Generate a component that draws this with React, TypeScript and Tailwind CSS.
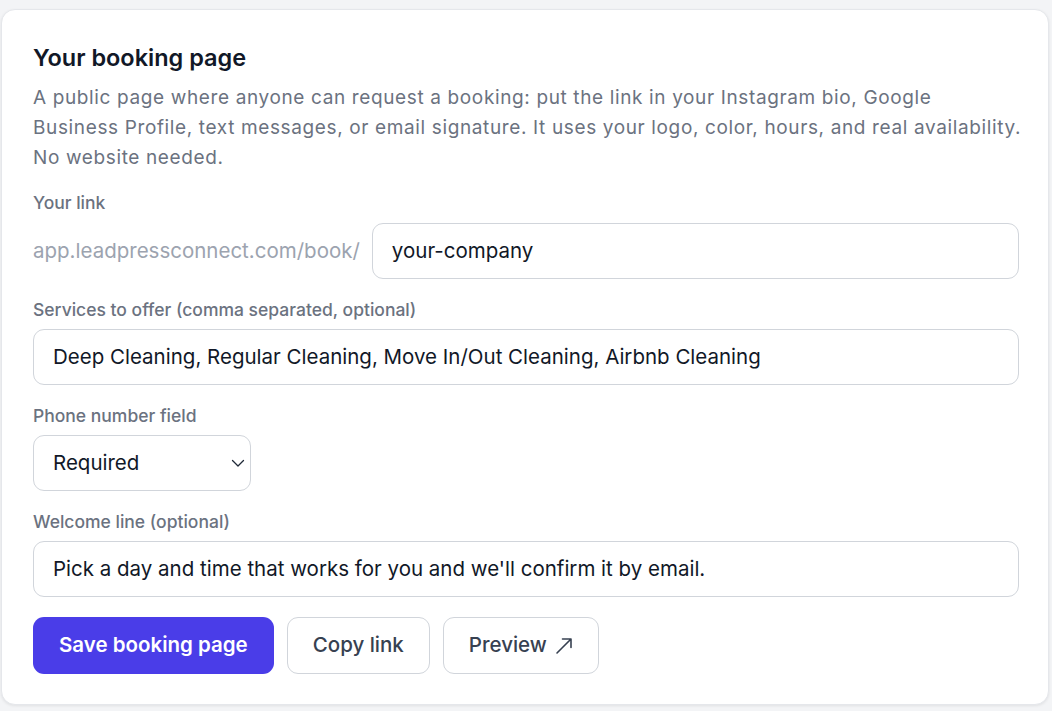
import React from "react";

function Label({ children }: { children: React.ReactNode }) {
  return <div className="text-[17.5px] leading-[20px] font-medium text-[#6b7280]">{children}</div>;
}

export default function App() {
  return (
    <div
      className="min-h-[711px] w-full bg-[#f3f4f6] pt-[9px] pl-[1px] pr-[3px] pb-[6px]"
      style={{ fontFamily: "Inter, 'Noto Sans', sans-serif" }}
    >
      <div className="rounded-[14px] border border-[#e5e7eb] bg-white pl-[31px] pr-[29px] pt-[33px] pb-[30px] shadow-[0_1px_3px_rgba(0,0,0,0.08)]">
        <h2 className="text-[23.5px] leading-[30px] font-semibold text-[#111827]">Your booking page</h2>
        <p className="mt-[10px] mr-[-18px] whitespace-nowrap text-[19px] leading-[30px] tracking-[0.63px] text-[#6b7280]">
          A public page where anyone can request a booking: put the link in your Instagram bio, Google
          <br />
          Business Profile, text messages, or email signature. It uses your logo, color, hours, and real availability.
          <br />
          No website needed.
        </p>

        <div className="mt-[20px] flex flex-col gap-[21px]">
          <div>
            <Label>Your link</Label>
            <div className="mt-[10px] flex items-center gap-[12px]">
              <span className="text-[20.5px] text-[#9ca3af] whitespace-nowrap">app.leadpressconnect.com/book/</span>
              <div className="flex h-[56px] flex-1 items-center rounded-[11px] border border-[#d1d5db] px-[19px] text-[20.5px] text-[#111827]">
                your-company
              </div>
            </div>
          </div>

          <div>
            <Label>Services to offer (comma separated, optional)</Label>
            <div className="mt-[9px] flex h-[56px] items-center rounded-[11px] border border-[#d1d5db] px-[19px] text-[20.5px] text-[#111827]">
              Deep Cleaning, Regular Cleaning, Move In/Out Cleaning, Airbnb Cleaning
            </div>
          </div>

          <div>
            <Label>Phone number field</Label>
            <div className="mt-[9px] flex h-[56px] w-[218px] items-center justify-between rounded-[11px] border border-[#d1d5db] pl-[19px] pr-[4px] text-[20.5px] text-[#111827]">
              <span>Required</span>
              <svg width="16" height="16" viewBox="0 0 16 16" fill="none">
                <path d="M2.5 5.5l5.5 5.5 5.5-5.5" stroke="#1f2937" strokeWidth="1.3" strokeLinecap="round" strokeLinejoin="round" />
              </svg>
            </div>
          </div>

          <div>
            <Label>Welcome line (optional)</Label>
            <div className="mt-[9px] flex h-[56px] items-center rounded-[11px] border border-[#d1d5db] px-[19px] text-[20.5px] text-[#111827]">
              Pick a day and time that works for you and we'll confirm it by email.
            </div>
          </div>
        </div>

        <div className="mt-[20px] flex gap-[13px]">
          <button className="h-[57px] rounded-[11px] bg-[#4a3de8] px-[26px] text-[20.5px] font-semibold text-white">
            Save booking page
          </button>
          <button className="h-[57px] rounded-[11px] border border-[#d1d5db] bg-white px-[25px] text-[20.5px] font-medium text-[#374151]">
            Copy link
          </button>
          <button className="flex h-[57px] items-center gap-[8px] rounded-[11px] border border-[#d1d5db] bg-white px-[25px] text-[20.5px] font-medium text-[#374151]">
            <span>Preview</span>
            <svg width="18" height="18" viewBox="0 0 18 18" fill="none">
              <path d="M2 16L16 2M7.5 2H16V10.5" stroke="#374151" strokeWidth="1.6" strokeLinecap="round" strokeLinejoin="round" />
            </svg>
          </button>
        </div>
      </div>
    </div>
  );
}
